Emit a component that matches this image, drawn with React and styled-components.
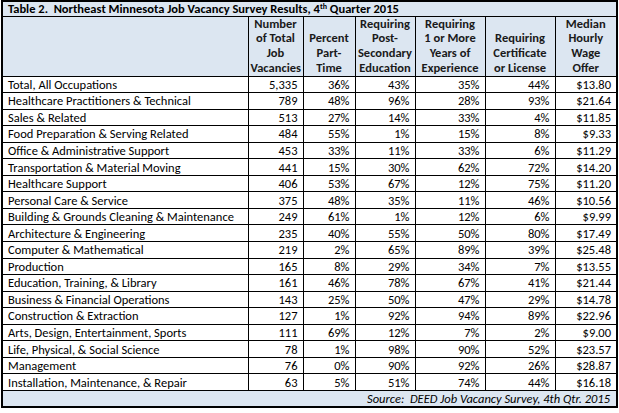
import React from 'react';
import styled, { createGlobalStyle } from 'styled-components';

const GlobalStyle = createGlobalStyle`
  html, body { margin: 0; padding: 0; background: #ffffff; }
  body { font-family: Carlito, Lato, "Liberation Sans", sans-serif; color: #000; }
`;

const rows = [
  ['Total, All Occupations', '5,335', '36%', '43%', '35%', '44%', '$13.80'],
  ['Healthcare Practitioners & Technical', '789', '48%', '96%', '28%', '93%', '$21.64'],
  ['Sales & Related', '513', '27%', '14%', '33%', '4%', '$11.85'],
  ['Food Preparation & Serving Related', '484', '55%', '1%', '15%', '8%', '$9.33'],
  ['Office & Administrative Support', '453', '33%', '11%', '33%', '6%', '$11.29'],
  ['Transportation & Material Moving', '441', '15%', '30%', '62%', '72%', '$14.20'],
  ['Healthcare Support', '406', '53%', '67%', '12%', '75%', '$11.20'],
  ['Personal Care & Service', '375', '48%', '35%', '11%', '46%', '$10.56'],
  ['Building & Grounds Cleaning & Maintenance', '249', '61%', '1%', '12%', '6%', '$9.99'],
  ['Architecture & Engineering', '235', '40%', '55%', '50%', '80%', '$17.49'],
  ['Computer & Mathematical', '219', '2%', '65%', '89%', '39%', '$25.48'],
  ['Production', '165', '8%', '29%', '34%', '7%', '$13.55'],
  ['Education, Training, & Library', '161', '46%', '78%', '67%', '41%', '$21.44'],
  ['Business & Financial Operations', '143', '25%', '50%', '47%', '29%', '$14.78'],
  ['Construction & Extraction', '127', '1%', '92%', '94%', '89%', '$22.96'],
  ['Arts, Design, Entertainment, Sports', '111', '69%', '12%', '7%', '2%', '$9.00'],
  ['Life, Physical, & Social Science', '78', '1%', '98%', '90%', '52%', '$23.57'],
  ['Management', '76', '0%', '90%', '92%', '26%', '$28.87'],
  ['Installation, Maintenance, & Repair', '63', '5%', '51%', '74%', '44%', '$16.18'],
];

const headers = [
  ['Number', 'of Total', 'Job', 'Vacancies'],
  ['Percent', 'Part-', 'Time'],
  ['Requiring', 'Post-', 'Secondary', 'Education'],
  ['Requiring', '1 or More', 'Years of', 'Experience'],
  ['Requiring', 'Certificate', 'or License'],
  ['Median', 'Hourly', 'Wage', 'Offer'],
];

const widths = [246, 55, 52, 60, 70, 70, 62];

const Table = styled.table`
  margin: 0 0 0 1px;
  width: 617px;
  table-layout: fixed;
  border-collapse: collapse;
  border: 2px solid #000;
  font-size: 12.5px;
`;

const Row = styled.tr`
  height: ${p => p.$h}px;
`;

const TitleCell = styled.td`
  background: #dce6f1;
  border-bottom: 1px solid #000;
  padding: 0 0 0 5px;
  line-height: 13px;
  font-weight: bold;
  white-space: nowrap;
  sup { font-size: 8px; line-height: 0; vertical-align: 4px; }
`;

const HeadCell = styled.th`
  background: #dce6f1;
  border: 1px solid #000;
  padding: 0 2px 0;
  vertical-align: bottom;
  text-align: center;
  font-weight: bold;
  line-height: 14.75px;
  color: #1a1a1a;
`;

const Cell = styled.td`
  border: 1px solid #000;
  padding: ${p => (p.$name ? '0 0 0 5px' : '0 5px 0 0')};
  line-height: 13px;
  text-align: ${p => (p.$name ? 'left' : 'right')};
  white-space: nowrap;
  overflow: hidden;
`;

const SourceCell = styled.td`
  background: #dce6f1;
  padding: 0 6px 0 0;
  line-height: 14px;
  text-align: right;
  font-style: italic;
`;

export default function App() {
  return (
    <>
      <GlobalStyle />
      <Table>
        <colgroup>
          {widths.map((w, i) => <col key={i} style={{ width: w }} />)}
        </colgroup>
        <tbody>
          <Row $h={15}>
            <TitleCell colSpan={7}>
              Table 2.&nbsp; Northeast Minnesota Job Vacancy Survey Results, 4<sup>th</sup> Quarter 2015
            </TitleCell>
          </Row>
          <Row $h={60}>
            <HeadCell />
            {headers.map((h, i) => (
              <HeadCell key={i}>
                {h.map((line, j) => <div key={j}>{line}</div>)}
              </HeadCell>
            ))}
          </Row>
          {rows.map((r, i) => (
            <Row key={i} $h={16.55}>
              {r.map((v, j) => <Cell key={j} $name={j === 0}>{v}</Cell>)}
            </Row>
          ))}
          <Row $h={17}>
            <SourceCell colSpan={7}>Source:&nbsp; DEED Job Vacancy Survey, 4th Qtr. 2015</SourceCell>
          </Row>
        </tbody>
      </Table>
    </>
  );
}
